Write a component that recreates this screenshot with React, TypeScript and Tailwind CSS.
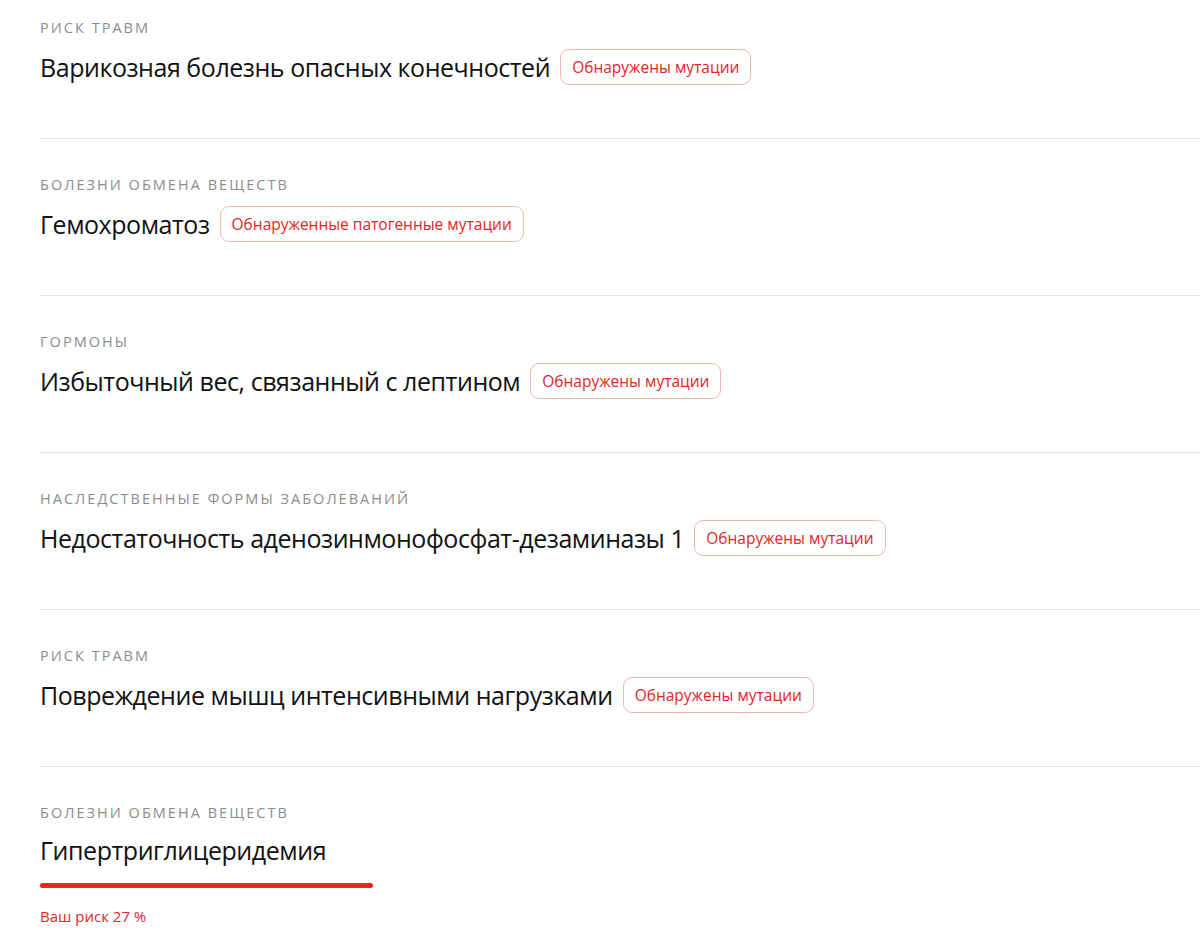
const font = { fontFamily: '"Open Sans", "Noto Sans", sans-serif' };

type Item = { category: string; title: string; badge?: string };

const items: Item[] = [
  { category: "Риск травм", title: "Варикозная болезнь опасных конечностей", badge: "Обнаружены мутации" },
  { category: "Болезни обмена веществ", title: "Гемохроматоз", badge: "Обнаруженные патогенные мутации" },
  { category: "Гормоны", title: "Избыточный вес, связанный с лептином", badge: "Обнаружены мутации" },
  { category: "Наследственные формы заболеваний", title: "Недостаточность аденозинмонофосфат-дезаминазы 1", badge: "Обнаружены мутации" },
  { category: "Риск травм", title: "Повреждение мышц интенсивными нагрузками", badge: "Обнаружены мутации" },
];

function Row({ item, first }: { item: Item; first?: boolean }) {
  return (
    <div className={`border-b border-[#e6e6e6] ${first ? "pt-[19px]" : "pt-[37px]"} pb-[53px]`}>
      <div className="text-[14.5px] leading-[18px] uppercase tracking-[0.14em] text-[#8c8c8c]">{item.category}</div>
      <div className="mt-[12px] flex items-center gap-[10px]">
        <h3 className="text-[25px] leading-[36px] tracking-[-0.45px] text-[#111]">{item.title}</h3>
        {item.badge && (
          <span className="rounded-[9px] border border-[#f3b4b4] px-[11px] py-[6px] text-[15.5px] leading-[22px] text-[#e0262b]">
            {item.badge}
          </span>
        )}
      </div>
    </div>
  );
}

export default function App() {
  return (
    <div className="min-h-[947px] bg-white pl-10" style={font}>
      {items.map((item, i) => (
        <Row key={i} item={item} first={i === 0} />
      ))}
      <div className="pt-[37px]">
        <div className="text-[14.5px] leading-[18px] uppercase tracking-[0.14em] text-[#8c8c8c]">Болезни обмена веществ</div>
        <h3 className="mt-[10px] text-[25px] leading-[36px] tracking-[-0.45px] text-[#111]">Гипертриглицеридемия</h3>
        <div className="mt-[15px] h-[5px] w-[333px] rounded-full bg-[#f2231f]" />
        <div className="mt-[19px] text-[15px] leading-[18px] text-[#e0262b]">Ваш риск 27 %</div>
      </div>
    </div>
  );
}
